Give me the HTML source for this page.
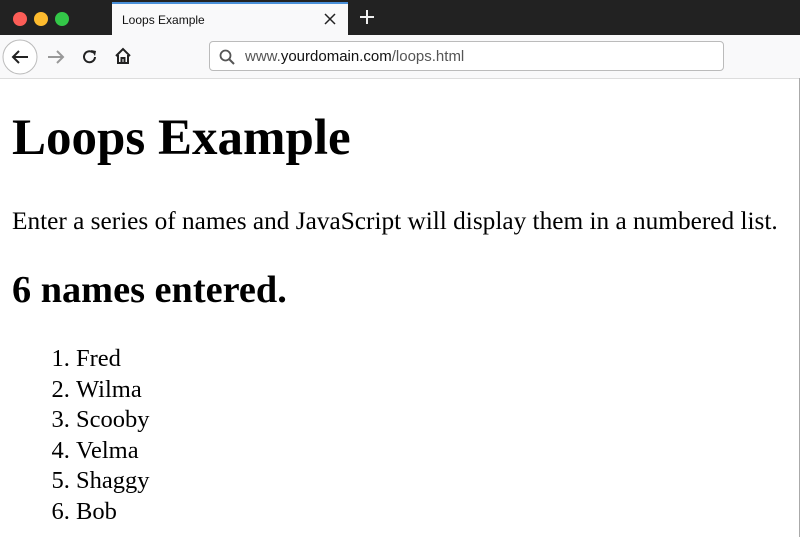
<!DOCTYPE html>
<html><head><style>
body{margin:0;width:800px;height:537px;overflow:hidden;background:#fff;font-family:"Liberation Serif",serif;position:relative}
.tabs{position:absolute;top:0;left:0;width:800px;height:35px;background:#222}
.dot{position:absolute;top:12px;width:14px;height:14px;border-radius:50%}
.tab{position:absolute;left:112px;top:2px;width:236px;height:33px;background:#f9f9fa;border-top:2px solid #4a90d9;box-sizing:border-box}
.tab span{position:absolute;left:10px;top:9px;font:12px "Liberation Sans",sans-serif;color:#111}
.tb{position:absolute;top:35px;left:0;width:800px;height:43px;background:#f9f9fa;border-bottom:1px solid #ddd}
.url{position:absolute;left:209px;top:6px;width:515px;height:30px;background:#fff;border:1px solid #bbb;border-radius:4px;box-sizing:border-box}
.url span{position:absolute;left:35px;top:6px;font:15px "Liberation Sans",sans-serif;color:#555}
.url b{font-weight:normal;color:#111}
h1{position:absolute;left:12px;top:109px;margin:0;font-size:51px;font-weight:bold;line-height:58px}
p{position:absolute;left:12px;top:206px;margin:0;font-size:25.3px;line-height:30px}
h2{position:absolute;left:12px;top:269px;margin:0;font-size:38.3px;font-weight:bold;line-height:42px}
ol{position:absolute;left:36px;top:344px;margin:0;padding-left:40px;font-size:24.5px;line-height:30.5px}
.edge{position:absolute;right:0;top:78px;width:1px;height:459px;background:#aaa}
</style></head><body>
<div class="tabs">
<div class="dot" style="left:13px;background:#fc5d57"></div>
<div class="dot" style="left:34px;background:#fdbb2e"></div>
<div class="dot" style="left:55px;background:#33c748"></div>
<div class="tab"><span>Loops Example</span>
<svg style="position:absolute;left:212px;top:9px" width="12" height="12"><path d="M1 1L11 11M11 1L1 11" stroke="#222" stroke-width="1.5"/></svg></div>
<svg style="position:absolute;left:359px;top:9px" width="16" height="16"><path d="M8 1V15M1 8H15" stroke="#eee" stroke-width="2"/></svg>
</div>
<div class="tb">
<svg style="position:absolute;left:2px;top:4px" width="36" height="36"><circle cx="18" cy="18" r="17" fill="#fff" stroke="#bbb"/><path d="M11 18H26M17 12L11 18L17 24" fill="none" stroke="#222" stroke-width="2"/></svg>
<svg style="position:absolute;left:46px;top:13px" width="20" height="18"><path d="M2 9H17M11 3L17 9L11 15" fill="none" stroke="#999" stroke-width="2"/></svg>
<svg style="position:absolute;left:81px;top:13px" width="18" height="18"><path d="M14 9A5.5 5.5 0 1 1 12 4.5" fill="none" stroke="#222" stroke-width="2"/><path d="M10 2L15 3L14 8Z" fill="#222"/></svg>
<svg style="position:absolute;left:114px;top:12px" width="18" height="18"><path d="M2 9L9 2L16 9M4 8V16H14V8M7.5 16V11H10.5V16" fill="none" stroke="#222" stroke-width="2"/></svg>
<div class="url"><svg style="position:absolute;left:9px;top:7px" width="16" height="16"><circle cx="6.5" cy="6.5" r="5" fill="none" stroke="#555" stroke-width="1.8"/><path d="M10 10L15 15" stroke="#555" stroke-width="2"/></svg><span>www.<b>yourdomain.com</b>/loops.html</span></div>
</div>
<div class="edge"></div>
<h1>Loops Example</h1>
<p>Enter a series of names and JavaScript will display them in a numbered list.</p>
<h2>6 names entered.</h2>
<ol><li>Fred</li><li>Wilma</li><li>Scooby</li><li>Velma</li><li>Shaggy</li><li>Bob</li></ol>
</body></html>
